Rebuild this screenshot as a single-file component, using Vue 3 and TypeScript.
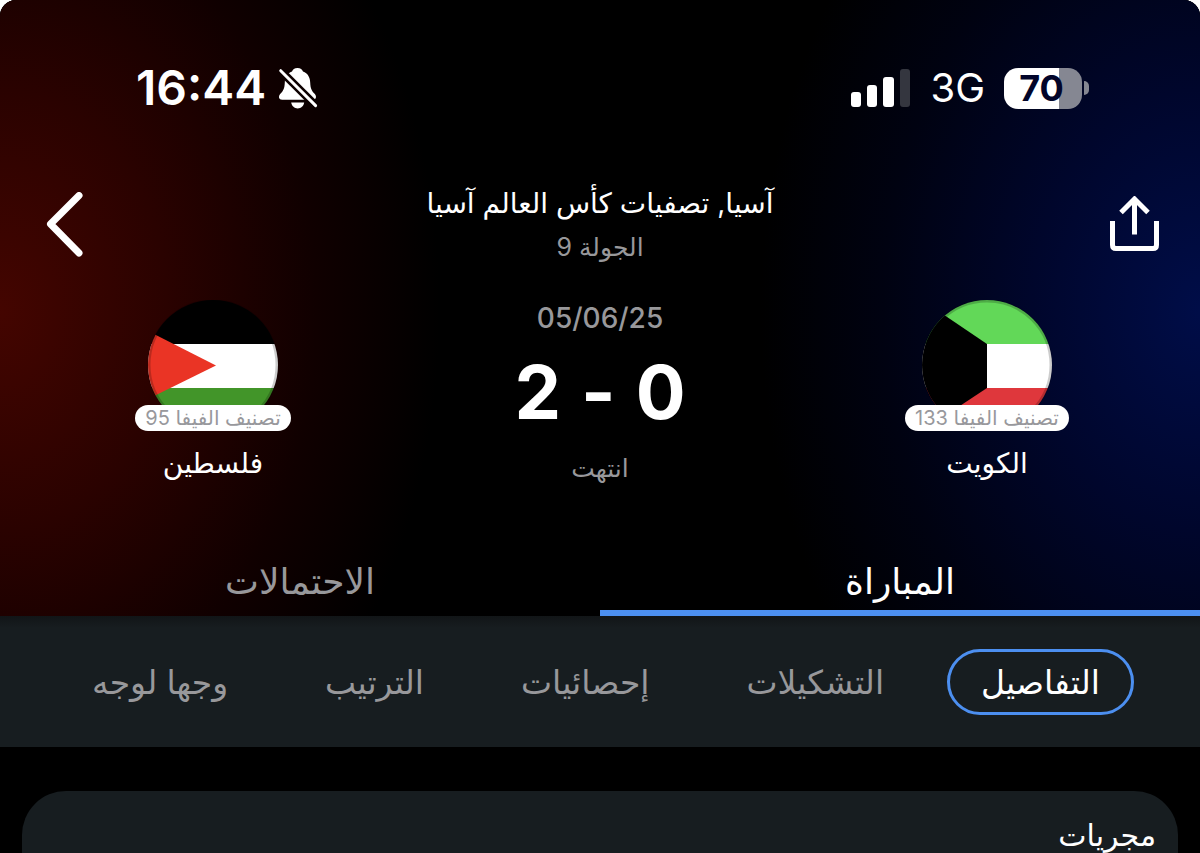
<script setup lang="ts">
import { ref } from 'vue'

interface Team {
  id: 'kuwait' | 'palestine'
  name: string
  rank: string
}

const kuwait: Team = { id: 'kuwait', name: 'الكويت', rank: 'تصنيف الفيفا 133' }
const palestine: Team = { id: 'palestine', name: 'فلسطين', rank: 'تصنيف الفيفا 95' }

const mainTabs: string[] = ['المباراة', 'الاحتمالات']
const activeMain = ref(0)

const subTabs: string[] = ['التفاصيل', 'التشكيلات', 'إحصائيات', 'الترتيب', 'وجها لوجه']
const activeSub = ref(0)
</script>

<template>
  <div class="screen" dir="rtl" lang="ar">
    <header class="hero">
      <div class="status" dir="ltr">
        <div class="status-side">
          <span class="clock">16:44</span>
          <svg class="bell" viewBox="0 0 40 42" aria-hidden="true">
            <mask id="slash-gap">
              <rect width="40" height="42" fill="#fff" />
              <path d="M-1 0 L41 42" stroke="#000" stroke-width="8" />
            </mask>
            <g mask="url(#slash-gap)" fill="#fff">
              <path d="M19.5 1 C22.5 1 24.4 2.6 25 4.6 C29.8 6.2 32 10.4 32.2 15.5 C32.4 21.5 33.8 24 36.6 26.8 C39 29.4 38.2 32.8 34.8 32.8 H4.2 C.8 32.8 0 29.6 2.4 26.8 C5.2 24 6.6 21.5 6.8 15.5 C7 10.4 9.2 6.2 14 4.6 C14.6 2.6 16.5 1 19.5 1 Z" />
            </g>
            <path d="M13.2 35.6 H26.2 C25.6 39.4 23 41.4 19.7 41.4 C16.4 41.4 13.8 39.4 13.2 35.6 Z" fill="#fff" />
            <path d="M2.7 3.7 L37.6 38.6" stroke="#fff" stroke-width="3" stroke-linecap="round" />
          </svg>
        </div>
        <div class="status-side">
          <svg class="signal" viewBox="0 0 60 39" aria-hidden="true">
            <rect x="0" y="23" width="10" height="15" rx="3" fill="#fff" />
            <rect x="16" y="16" width="10" height="22" rx="3" fill="#fff" />
            <rect x="32" y="8" width="11" height="30" rx="3" fill="#fff" />
            <rect x="49" y="0" width="10" height="38" rx="3" fill="#34363f" />
          </svg>
          <span class="network">3G</span>
          <span class="battery"><span class="battery-body">70</span><span class="battery-cap"></span></span>
        </div>
      </div>

      <div class="toolbar">
        <button class="icon-btn" type="button" aria-label="مشاركة">
          <svg class="share" viewBox="0 0 50 58" fill="none" stroke="#fff" stroke-width="5" aria-hidden="true">
            <path d="M2.5 25 V49 Q2.5 52.5 6 52.5 H43 Q46.5 52.5 46.5 49 V25" />
            <path d="M24.5 38.5 V4 M11 16.5 L24.5 3 L38 16.5" />
          </svg>
        </button>
        <div class="titles">
          <h1 class="league">آسيا, تصفيات كأس العالم آسيا</h1>
          <p class="round">الجولة 9</p>
        </div>
        <button class="icon-btn back-btn" type="button" aria-label="رجوع">
          <svg class="back" viewBox="0 0 38 66" fill="none" stroke="#fff" stroke-width="7" stroke-linecap="round" stroke-linejoin="round" aria-hidden="true">
            <path d="M33 3.500 L4.500 32 L33 61" />
          </svg>
        </button>
      </div>

      <div class="match">
        <div class="team">
          <svg class="flag" viewBox="0 0 130 130" aria-hidden="true">
            <clipPath id="kw-clip"><circle cx="65" cy="65" r="65" /></clipPath>
            <g clip-path="url(#kw-clip)">
              <rect width="130" height="44" fill="#62d858" />
              <rect y="44" width="130" height="44" fill="#fff" />
              <rect y="88" width="130" height="42" fill="#df373c" />
              <path d="M0 0 L65 44 V88 L0 131 Z" fill="#000" />
            </g>
            <circle cx="65" cy="65" r="64" fill="none" stroke="#000" stroke-opacity=".2" stroke-width="3" />
          </svg>
          <span class="rank">{{ kuwait.rank }}</span>
          <h2 class="name">{{ kuwait.name }}</h2>
        </div>

        <div class="result">
          <time class="date" datetime="2025-06-05" dir="ltr">05/06/25</time>
          <p class="score" dir="ltr"><span>2</span><span>-</span><span>0</span></p>
          <p class="state">انتهت</p>
        </div>

        <div class="team">
          <svg class="flag" viewBox="0 0 130 130" aria-hidden="true">
            <clipPath id="ps-clip"><circle cx="65" cy="65" r="65" /></clipPath>
            <g clip-path="url(#ps-clip)">
              <rect width="130" height="44" fill="#000" />
              <rect y="44" width="130" height="44" fill="#fff" />
              <rect y="88" width="130" height="42" fill="#429529" />
              <path d="M0 31 L68 65.500 L0 99 Z" fill="#ea3425" />
            </g>
            <circle cx="65" cy="65" r="64" fill="none" stroke="#000" stroke-opacity=".2" stroke-width="3" />
          </svg>
          <span class="rank">{{ palestine.rank }}</span>
          <h2 class="name">{{ palestine.name }}</h2>
        </div>
      </div>

      <nav class="main-tabs">
        <button
          v-for="(tab, i) in mainTabs"
          :key="tab"
          type="button"
          class="main-tab"
          :class="{ active: activeMain === i }"
          @click="activeMain = i"
        >{{ tab }}</button>
      </nav>
    </header>

    <nav class="sub-tabs">
      <button
        v-for="(tab, i) in subTabs"
        :key="tab"
        type="button"
        class="sub-tab"
        :class="{ active: activeSub === i }"
        @click="activeSub = i"
      >{{ tab }}</button>
    </nav>

    <main class="content">
      <section class="card">
        <h2 class="card-title">مجريات</h2>
      </section>
    </main>
  </div>
</template>

<style>
html,
body {
  margin: 0;
  background: #fff;
}
</style>

<style scoped>
.screen {
  box-sizing: border-box;
  height: 100vh;
  overflow: hidden;
  background: #000;
  border-radius: 16px 16px 0 0;
  color: #fff;
  font-family: Inter, "DejaVu Sans", sans-serif;
}

h1,
h2,
p {
  margin: 0;
  font-weight: 400;
}

button {
  margin: 0;
  padding: 0;
  border: 0;
  background: none;
  color: inherit;
  font: inherit;
  cursor: pointer;
}

svg {
  display: block;
}

.hero {
  background:
    radial-gradient(440px 580px at 0 310px, #440500, #2a0200 38%, #100000 72%, transparent),
    radial-gradient(440px 580px at 100% 310px, #000d48, #00062c 38%, #000211 72%, transparent),
    #000;
}

.status {
  display: flex;
  justify-content: space-between;
  align-items: center;
  padding: 60px 111px 0 136px;
  height: 56px;
}

.status-side {
  display: flex;
  align-items: center;
}

.clock {
  font-size: 48px;
  font-weight: 600;
  line-height: 58px;
}

.bell {
  width: 40px;
  height: 42px;
  margin-left: 12px;
}

.signal {
  width: 60px;
  height: 39px;
}

.network {
  margin: 0 19px;
  font-size: 40px;
  line-height: 58px;
}

.battery {
  display: flex;
  align-items: center;
  gap: 2px;
}

.battery-body {
  box-sizing: border-box;
  width: 78px;
  height: 41px;
  padding-right: 3px;
  border-radius: 14px;
  background: linear-gradient(90deg, #fff 70%, #858792 70%);
  color: #02052a;
  font-size: 36px;
  font-weight: 700;
  line-height: 41px;
  text-align: center;
}

.battery-cap {
  width: 5px;
  height: 14px;
  border-radius: 0 7px 7px 0;
  background: #858792;
}

.toolbar {
  display: flex;
  justify-content: space-between;
  align-items: center;
  margin-top: 64px;
  padding: 0 40px;
  height: 90px;
}

.icon-btn {
  display: flex;
  width: 50px;
}

.back-btn {
  justify-content: center;
}

.share {
  width: 50px;
  height: 58px;
}

.back {
  width: 38px;
  height: 66px;
}

.titles {
  text-align: center;
}

.league {
  font-size: 28px;
  line-height: 44px;
}

.round {
  color: #98989b;
  font-size: 25px;
  line-height: 44px;
}

.match {
  display: grid;
  grid-template-columns: 1fr 348px 1fr;
  margin-top: 30px;
}

.team {
  display: flex;
  flex-direction: column;
  align-items: center;
}

.flag {
  width: 130px;
  height: 130px;
}

.rank {
  position: relative;
  margin-top: -25px;
  padding: 0 10px;
  border-radius: 13px;
  background: #fff;
  color: #98989c;
  font-size: 20px;
  line-height: 26px;
}

.name {
  margin-top: 12px;
  font-size: 28px;
  line-height: 40px;
}

.result {
  display: flex;
  flex-direction: column;
  align-items: center;
}

.date {
  color: #98989b;
  font-size: 28px;
  font-weight: 500;
  line-height: 36px;
}

.score {
  display: flex;
  gap: 20px;
  margin-top: 16px;
  font-size: 74px;
  font-weight: 700;
  line-height: 80px;
}

.state {
  margin-top: 16px;
  color: #98989b;
  font-size: 25px;
  line-height: 40px;
}

.main-tabs {
  display: grid;
  grid-template-columns: 1fr 1fr;
  margin-top: 64px;
}

.main-tab {
  border-bottom: 6px solid transparent;
  color: #98989b;
  font-size: 36px;
  line-height: 58px;
}

.main-tab.active {
  border-bottom-color: #4c8ff0;
  color: #fff;
}

.sub-tabs {
  display: flex;
  justify-content: space-between;
  align-items: center;
  height: 131px;
  padding: 0 66px 0 58px;
  background: linear-gradient(#111517, #171d20 12px);
}

.sub-tab {
  padding: 0 31px;
  border: 3px solid transparent;
  border-radius: 33px;
  color: #98989b;
  font-size: 33px;
  line-height: 60px;
}

.sub-tab.active {
  border-color: #4c8ff0;
  color: #fff;
}

.content {
  padding: 44px 22px;
}

.card {
  min-height: 200px;
  padding: 22px;
  border-radius: 44px;
  background: #171d20;
}

.card-title {
  font-size: 30px;
  line-height: 44px;
}
</style>
